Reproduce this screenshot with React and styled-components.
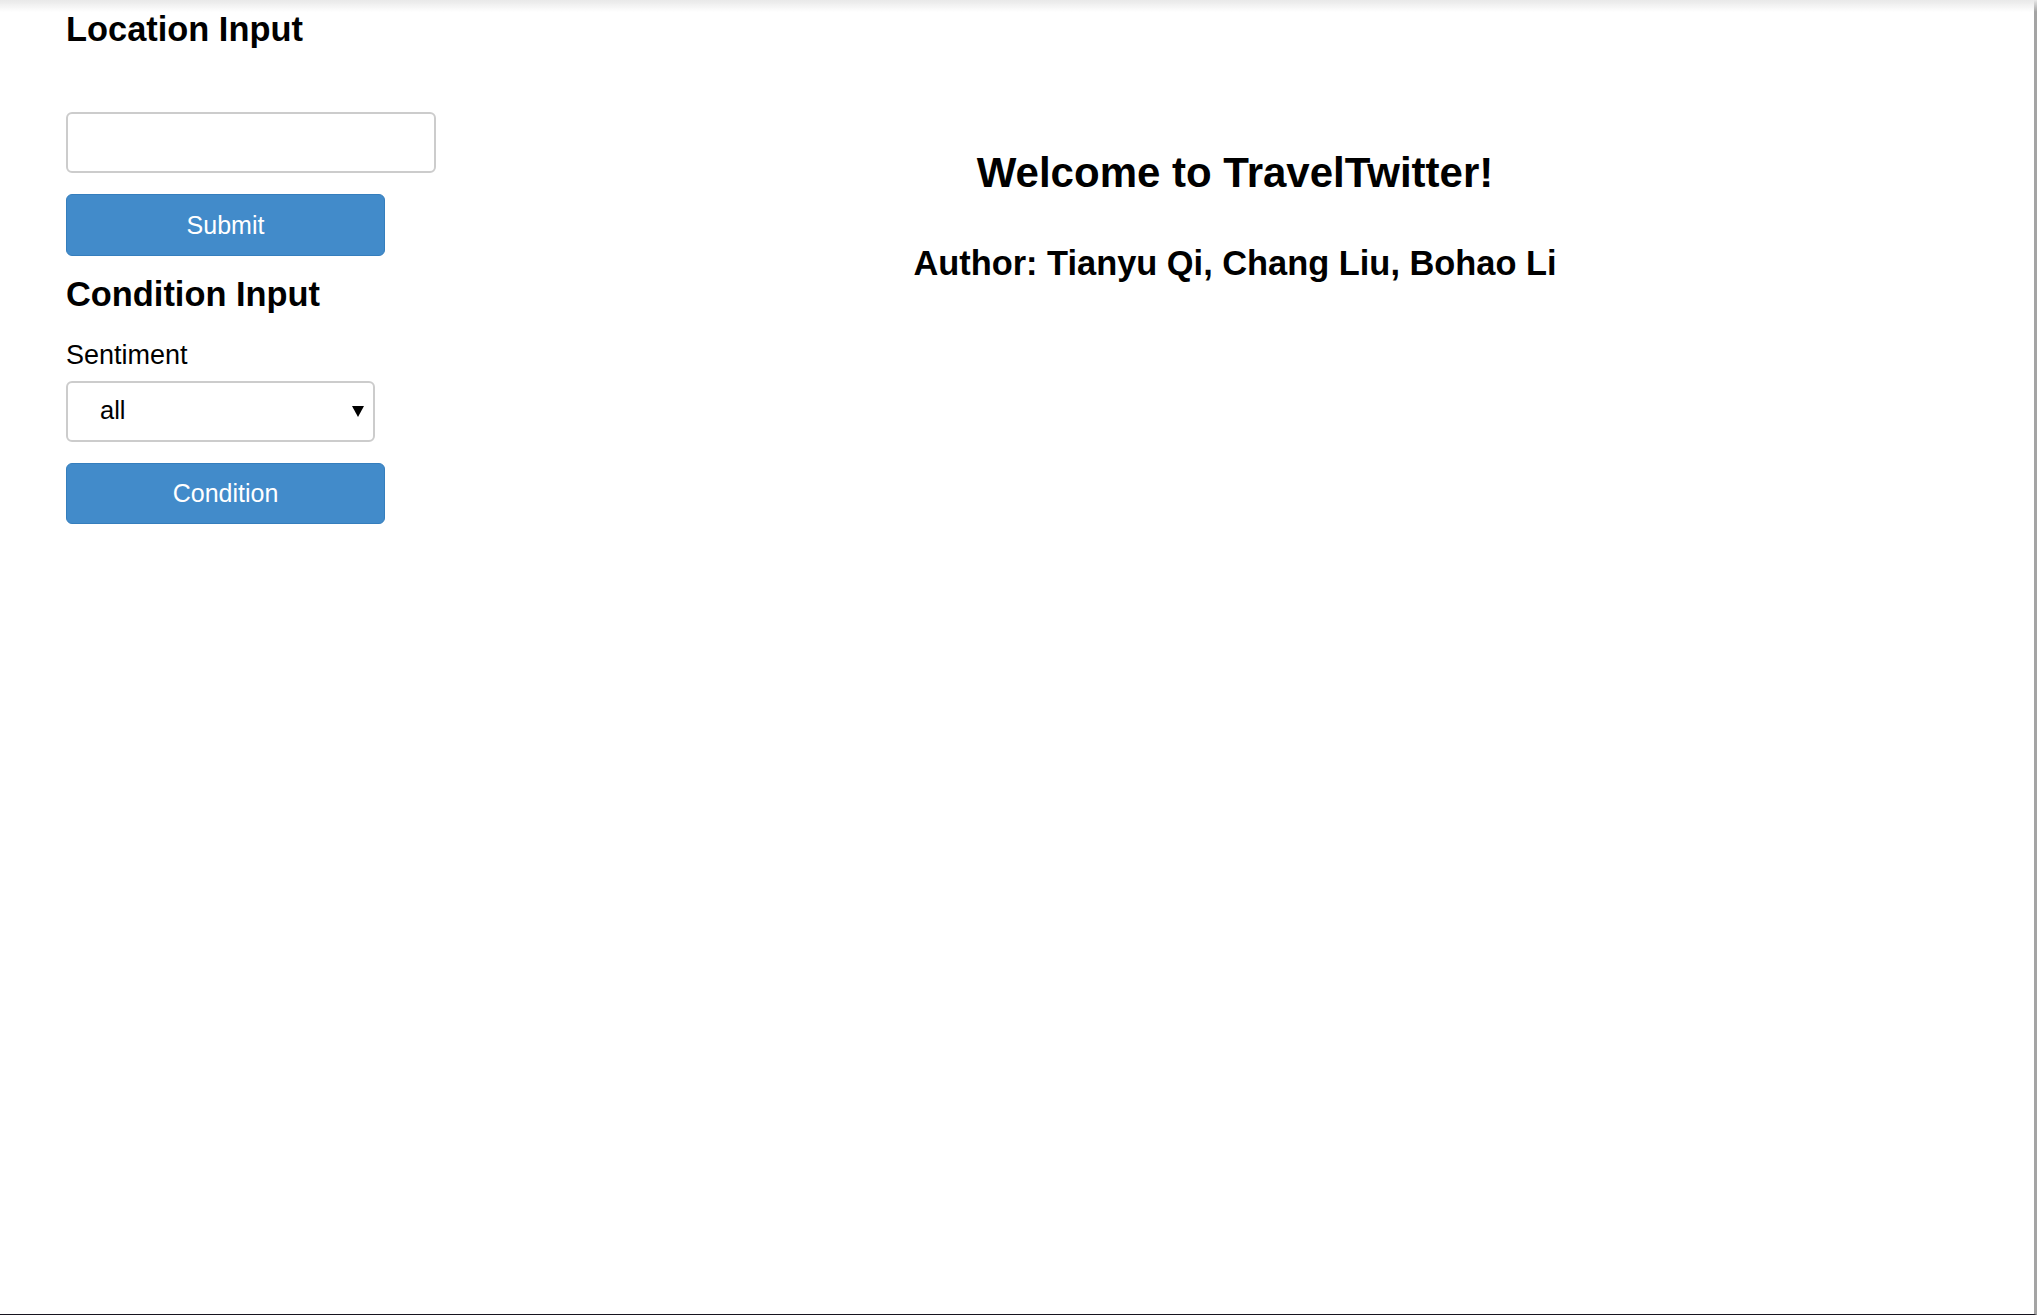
import React from 'react';
import styled, { createGlobalStyle } from 'styled-components';

const GlobalStyle = createGlobalStyle`
    html, body {
        margin: 0;
        padding: 0;
        background: #fff;
    }
    body {
        font-family: "Liberation Sans", Arial, Helvetica, sans-serif;
        color: #000;
    }
`;

export const Page = styled.div`
    display: flex;
    min-height: 100vh;
    box-sizing: border-box;
    border-right: 3px solid #a4a4a4;
    border-bottom: 1px solid #17141f;
`;

export const TopShade = styled.div`
    position: fixed;
    top: 0;
    left: 0;
    right: 0;
    height: 12px;
    background: linear-gradient(#e8e8e8, rgba(255, 255, 255, 0));
    pointer-events: none;
`;

export const Sidebar = styled.div`
    width: 436px;
    flex: 0 0 436px;
    box-sizing: border-box;
    padding: 9px 0 0 66px;
    display: flex;
    flex-direction: column;
    align-items: flex-start;
`;

export const Main = styled.div`
    flex: 1 1;
    text-align: center;
    padding-top: 149px;
`;

export const SectionTitle = styled.h3`
    margin: ${(p) => (p.$spaced ? '18px' : '0')} 0 0;
    font-size: 34.4px;
    line-height: 40px;
    font-weight: bold;
`;

export const FieldLabel = styled.label`
    margin-top: 26px;
    font-size: 27px;
    line-height: 31px;
`;

export const TextInput = styled.input`
    margin-top: 63px;
    width: 370px;
    height: 61px;
    box-sizing: border-box;
    border: 2px solid #cccccc;
    border-radius: 6px;
    padding: 0 16px;
    font-family: inherit;
    font-size: 25px;
    outline: none;
`;

export const ActionButton = styled.button`
    margin-top: 21px;
    width: 319px;
    height: ${(p) => p.$height || 62}px;
    box-sizing: border-box;
    background: #428bca;
    border: 1px solid #357ebd;
    border-radius: 6px;
    color: #fff;
    font-family: inherit;
    font-size: 25px;
    cursor: pointer;
`;

export const SelectWrap = styled.div`
    position: relative;
    margin-top: 10px;
    width: 309px;
    height: 61px;
`;

export const Select = styled.select`
    appearance: none;
    -webkit-appearance: none;
    width: 100%;
    height: 100%;
    box-sizing: border-box;
    border: 2px solid #cccccc;
    border-radius: 6px;
    background: #fff;
    padding: 0 0 4px 32px;
    font-family: inherit;
    font-size: 25.5px;
    color: #000;
    outline: none;
`;

export const Caret = styled.svg`
    position: absolute;
    right: 11px;
    top: 25px;
    width: 12px;
    height: 11px;
    pointer-events: none;
`;

export const Title = styled.h2`
    margin: 0;
    font-size: 42px;
    line-height: 48px;
    font-weight: bold;
`;

export const Authors = styled.h3`
    margin: 46px 0 0;
    font-size: 34.4px;
    line-height: 40px;
    font-weight: bold;
`;

export default function App() {
    return (
        <>
            <GlobalStyle />
            <Page>
                <Sidebar>
                    <SectionTitle>Location Input</SectionTitle>
                    <TextInput type="text" />
                    <ActionButton>Submit</ActionButton>
                    <SectionTitle $spaced>Condition Input</SectionTitle>
                    <FieldLabel>Sentiment</FieldLabel>
                    <SelectWrap>
                        <Select defaultValue="all">
                            <option value="all">all</option>
                            <option value="positive">positive</option>
                            <option value="neutral">neutral</option>
                            <option value="negative">negative</option>
                        </Select>
                        <Caret viewBox="0 0 12 11">
                            <polygon points="0,0 12,0 6,11" fill="#000" />
                        </Caret>
                    </SelectWrap>
                    <ActionButton $height={61}>Condition</ActionButton>
                </Sidebar>
                <Main>
                    <Title>Welcome to TravelTwitter!</Title>
                    <Authors>Author: Tianyu Qi, Chang Liu, Bohao Li</Authors>
                </Main>
            </Page>
            <TopShade />
        </>
    );
}
